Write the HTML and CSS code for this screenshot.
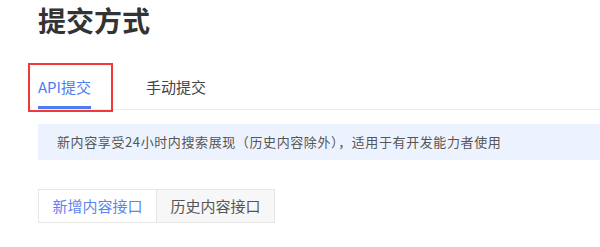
FILE: index.html
```html
<!DOCTYPE html>
<html lang="zh">
<head>
<meta charset="utf-8">
<link rel="stylesheet" href="styles.css">
</head>
<body>
<div class="page">
  <h1 class="title">提交方式</h1>
  <div class="tabs">
    <div class="tab active">API提交<span class="mark"></span></div>
    <div class="tab">手动提交</div>
  </div>
  <div class="notice">新内容享受24小时内搜索展现（历史内容除外），适用于有开发能力者使用</div>
  <div class="switch">
    <div class="btn on">新增内容接口</div>
    <div class="btn">历史内容接口</div>
  </div>
</div>
</body>
</html>
```
FILE: styles.css
```css
html, body {
  margin: 0;
  padding: 0;
  background: #fff;
  font-family: "Noto Sans CJK SC", "Noto Sans", sans-serif;
}
.page {
  padding-left: 38px;
  width: 562px;
  overflow: hidden;
}
.title {
  margin: 0;
  padding-top: 2px;
  font-size: 28px;
  line-height: 36px;
  font-weight: 700;
  color: #333;
}
.tabs {
  margin-top: 25px;
  display: flex;
  align-items: stretch;
  border-bottom: 1px solid #ececec;
  height: 47px;
  box-sizing: border-box;
}
.tab {
  position: relative;
  box-sizing: border-box;
  font-size: 15px;
  line-height: 24px;
  padding-top: 12px;
  color: #444;
  margin-right: 55px;
}
.tab.active {
  color: #4c7ef3;
}
.tab.active .mark {
  position: absolute;
  left: -10px;
  top: 0;
  width: 85px;
  height: 49px;
  box-sizing: border-box;
  border: 2px solid #f03a3a;
}
.tab.active::after {
  content: "";
  position: absolute;
  left: 0;
  right: 0;
  bottom: 0;
  height: 3px;
  background: #4c7ef3;
}
.notice {
  margin-top: 14px;
  height: 36px;
  background: #edf3fe;
  color: #555;
  font-size: 13px;
  letter-spacing: 0.6px;
  line-height: 36px;
  padding-left: 19px;
  white-space: nowrap;
}
.switch {
  margin-top: 29px;
  display: flex;
}
.btn {
  width: 117px;
  height: 32px;
  border: 1px solid #e6e6e6;
  font-size: 15px;
  line-height: 32px;
  text-align: center;
  color: #555;
  background: #f7f7f7;
}
.btn + .btn {
  border-left: none;
}
.btn.on {
  background: #fff;
  color: #5a86f1;
}
```
